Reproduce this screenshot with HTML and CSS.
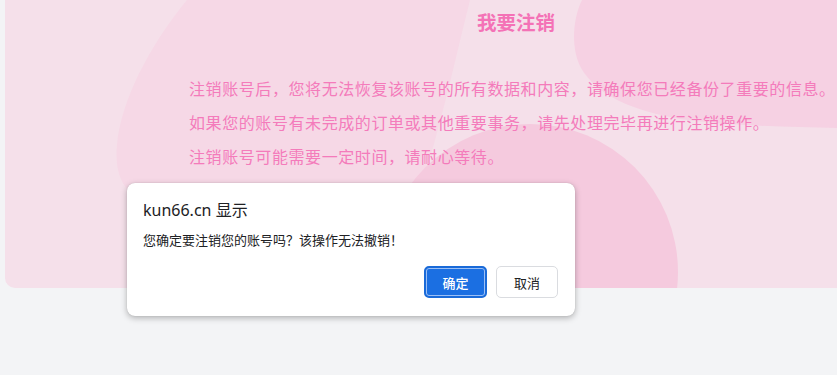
FILE: index.html
```html
<!DOCTYPE html>
<html lang="zh-CN">
<head>
<meta charset="utf-8">
<title>我要注销</title>
<link rel="stylesheet" href="styles.css">
</head>
<body>
<div class="page">
  <section class="card">
    <svg class="blobs" width="832" height="288" viewBox="5 0 832 288" aria-hidden="true">
      <path fill="#f6d8e6" d="M187 0 C150 45 121 100 117 145 C115 165 119 180 128 190 L420 190 C440 130 455 60 470 0 Z"/>
      <path fill="#f6d1e3" d="M582 0 C572 20 571 50 581 68 C597 95 630 110 680 119 C720 125 780 127 840 128 L840 0 Z"/>
      <circle fill="#f5cade" cx="530" cy="272" r="148"/>
    </svg>
    <h1 class="title">我要注销</h1>
    <div class="notes">
      <p>注销账号后，您将无法恢复该账号的所有数据和内容，请确保您已经备份了重要的信息。</p>
      <p>如果您的账号有未完成的订单或其他重要事务，请先处理完毕再进行注销操作。</p>
      <p>注销账号可能需要一定时间，请耐心等待。</p>
    </div>
  </section>

  <div class="dialog" role="dialog">
    <div class="dialog-title">kun66.cn 显示</div>
    <div class="dialog-msg">您确定要注销您的账号吗？该操作无法撤销！</div>
    <div class="dialog-actions">
      <button class="btn btn-ok">确定</button>
      <button class="btn btn-cancel">取消</button>
    </div>
  </div>
</div>
</body>
</html>
```

FILE: styles.css
```css
html, body {
  margin: 0;
  padding: 0;
  background: #f3f4f6;
  overflow: hidden;
  height: 375px;
}

.page {
  position: relative;
  padding-left: 5px;
  width: 837px;
  height: 375px;
  box-sizing: border-box;
  font-family: "Noto Sans", "Noto Sans CJK SC", sans-serif;
}

.card {
  position: relative;
  width: 832px;
  height: 288px;
  background: #f5e0ea;
  border-bottom-left-radius: 10px;
  overflow: hidden;
}

.blobs {
  position: absolute;
  left: 0;
  top: 0;
}

.title {
  position: relative;
  margin: 0;
  padding-left: 190px;
  text-align: center;
  font-family: "Noto Sans CJK SC", sans-serif;
  font-size: 19.5px;
  font-weight: 700;
  line-height: 44px;
  color: #f472b6;
}

.notes {
  position: relative;
  margin: 27px 0 0 184px;
  font-family: "Noto Sans CJK SC", sans-serif;
  font-size: 16px;
  letter-spacing: 0.58px;
  line-height: 34px;
  color: #f47bbb;
}

.notes p {
  margin: 0;
  white-space: nowrap;
}

.dialog {
  position: absolute;
  left: 127px;
  top: 183px;
  width: 448px;
  box-sizing: border-box;
  padding: 17px 17px 18px 16px;
  background: #fff;
  border-radius: 8px;
  box-shadow: 0 2px 6px rgba(0, 0, 0, 0.28), 0 0 1px rgba(0, 0, 0, 0.2);
  color: #202124;
}

.dialog-title {
  font-size: 16px;
  line-height: 20px;
  font-family: "Noto Sans", "Noto Sans CJK SC", sans-serif;
}

.dialog-msg {
  margin-top: 10px;
  font-size: 13px;
  line-height: 20px;
  font-family: "Noto Sans CJK SC", sans-serif;
}

.dialog-actions {
  margin-top: 16px;
  display: flex;
  justify-content: flex-end;
  gap: 9px;
}

.btn {
  height: 32px;
  box-sizing: border-box;
  border-radius: 5px;
  font-family: "Noto Sans CJK SC", sans-serif;
  font-size: 13px;
  line-height: 1;
  padding: 0;
  cursor: pointer;
}

.btn-ok {
  width: 63px;
  background: #1b6fe2;
  border: 2px solid #1a6ad8;
  box-shadow: inset 0 0 0 1px #9cc0f6;
  color: #fff;
  font-weight: 500;
}

.btn-cancel {
  width: 62px;
  background: #fff;
  border: 1px solid #dadce0;
  color: #202124;
}
```
